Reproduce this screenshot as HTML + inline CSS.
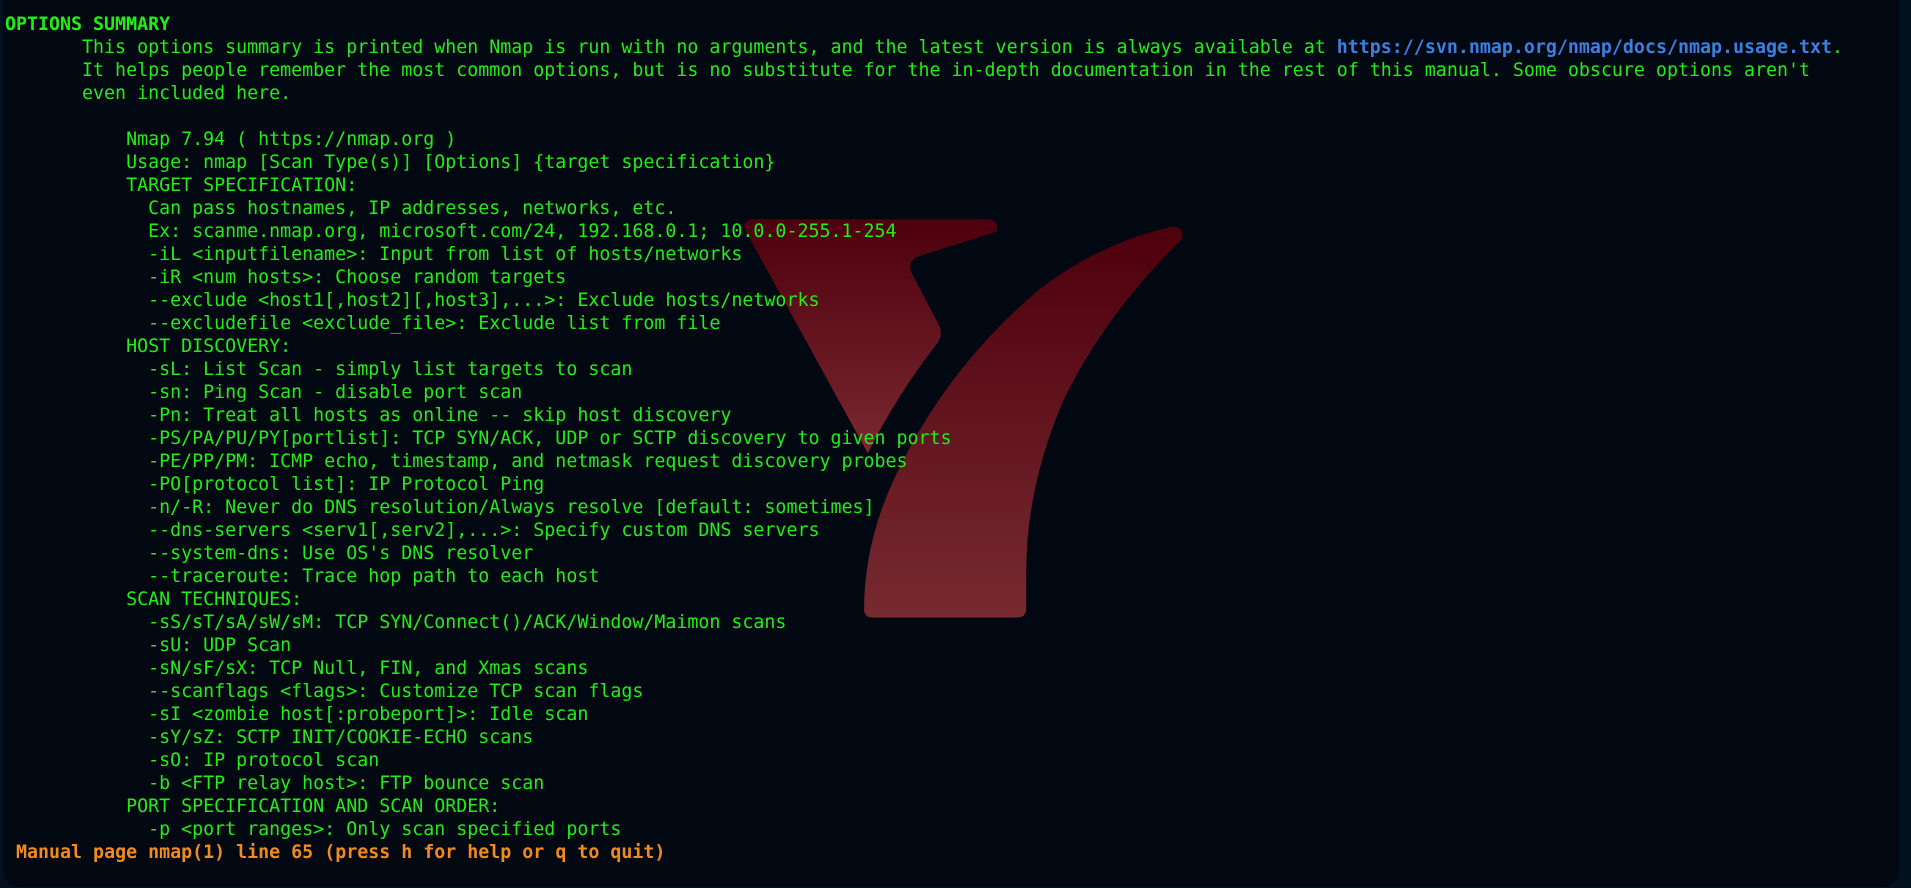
<!DOCTYPE html>
<html><head><meta charset="utf-8"><style>
html,body{margin:0;padding:0;background:#03101e;width:1911px;height:888px;overflow:hidden}
.panel{position:absolute;left:3px;top:0;width:1896px;height:887px;background:#020811;border-radius:0 0 16px 16px}
svg{position:absolute;left:0;top:0}
pre{position:absolute;left:5px;top:13px;margin:0;font-family:"DejaVu Sans Mono","Liberation Mono",monospace;font-size:18.3px;line-height:23px;color:#22ee16;white-space:pre}
b.h{font-weight:bold;color:#22ee16}
b.l{font-weight:bold;color:#3a80e2}
b.s{font-weight:bold;color:#f08c1e}
</style></head><body>
<div class="panel"></div>
<svg width="1911" height="888" viewBox="0 0 1568 729" preserveAspectRatio="none">
<defs><linearGradient id="g" x1="0" y1="0" x2="0" y2="1"><stop offset="0" stop-color="#4d000d"/><stop offset="1" stop-color="#7a2830"/></linearGradient>
<linearGradient id="g2" x1="0" y1="0" x2="0" y2="1"><stop offset="0" stop-color="#4d000d"/><stop offset="1" stop-color="#762a30"/></linearGradient></defs>
<path d="M616 180 L812 180 Q820 182 818 190 L752 211 Q744 216 748 224 L771 268 Q774 276 768 283 Q735 326 712 372 L612 190 Q608 182 616 180 Z" fill="url(#g)"/>
<path d="M962 186 Q972 186 970 196 Q905 260 872 330 Q842 400 842 470 L842 500 Q842 507 834 507 L716 507 Q709 507 709 500 Q709 440 740 380 Q780 300 850 240 Q900 200 962 186 Z" fill="url(#g2)"/>
</svg>
<pre><b class="h">OPTIONS SUMMARY</b>
       This options summary is printed when Nmap is run with no arguments, and the latest version is always available at <b class="l">https://svn.nmap.org/nmap/docs/nmap.usage.txt</b>.
       It helps people remember the most common options, but is no substitute for the in-depth documentation in the rest of this manual. Some obscure options aren't
       even included here.

           Nmap 7.94 ( https://nmap.org )
           Usage: nmap [Scan Type(s)] [Options] {target specification}
           TARGET SPECIFICATION:
             Can pass hostnames, IP addresses, networks, etc.
             Ex: scanme.nmap.org, microsoft.com/24, 192.168.0.1; 10.0.0-255.1-254
             -iL &lt;inputfilename&gt;: Input from list of hosts/networks
             -iR &lt;num hosts&gt;: Choose random targets
             --exclude &lt;host1[,host2][,host3],...&gt;: Exclude hosts/networks
             --excludefile &lt;exclude_file&gt;: Exclude list from file
           HOST DISCOVERY:
             -sL: List Scan - simply list targets to scan
             -sn: Ping Scan - disable port scan
             -Pn: Treat all hosts as online -- skip host discovery
             -PS/PA/PU/PY[portlist]: TCP SYN/ACK, UDP or SCTP discovery to given ports
             -PE/PP/PM: ICMP echo, timestamp, and netmask request discovery probes
             -PO[protocol list]: IP Protocol Ping
             -n/-R: Never do DNS resolution/Always resolve [default: sometimes]
             --dns-servers &lt;serv1[,serv2],...&gt;: Specify custom DNS servers
             --system-dns: Use OS's DNS resolver
             --traceroute: Trace hop path to each host
           SCAN TECHNIQUES:
             -sS/sT/sA/sW/sM: TCP SYN/Connect()/ACK/Window/Maimon scans
             -sU: UDP Scan
             -sN/sF/sX: TCP Null, FIN, and Xmas scans
             --scanflags &lt;flags&gt;: Customize TCP scan flags
             -sI &lt;zombie host[:probeport]&gt;: Idle scan
             -sY/sZ: SCTP INIT/COOKIE-ECHO scans
             -sO: IP protocol scan
             -b &lt;FTP relay host&gt;: FTP bounce scan
           PORT SPECIFICATION AND SCAN ORDER:
             -p &lt;port ranges&gt;: Only scan specified ports
 <b class="s">Manual page nmap(1) line 65 (press h for help or q to quit)</b></pre>
</body></html>
